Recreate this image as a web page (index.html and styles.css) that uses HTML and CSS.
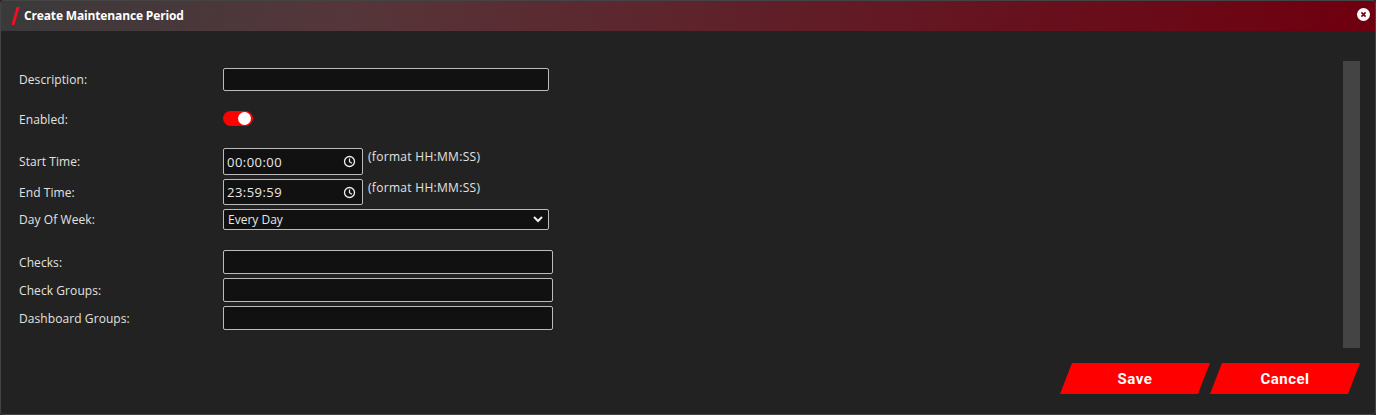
FILE: index.html
```html
<!DOCTYPE html>
<html lang="en">
<head>
    <meta charset="UTF-8">
    <title>Create Maintenance Period</title>
    <link rel="stylesheet" href="styles.css">
</head>
<body>
    <div class="dialog">
        <div class="titlebar">
            <span class="slash"></span>
            <span class="title">Create Maintenance Period</span>
            <span class="close">
                <svg width="11" height="11" viewBox="0 0 11 11"><path d="M3.4 3.4l4.2 4.2M7.6 3.4l-4.2 4.2" stroke="#7a0010" stroke-width="1.6" fill="none"/></svg>
            </span>
        </div>

        <div class="content">
            <div class="form">
                <div class="row row-description">
                    <label>Description:</label>
                    <div class="field input input-wide"></div>
                </div>
                <div class="row row-enabled">
                    <label>Enabled:</label>
                    <div class="toggle"><span class="knob"></span></div>
                </div>
                <div class="row row-start">
                    <label>Start Time:</label>
                    <div class="field input input-time">
                        <span class="time">00:00:00</span>
                        <svg class="clock" width="13" height="13" viewBox="0 0 13 13"><circle cx="6.5" cy="6.5" r="5" stroke="#eee" stroke-width="1.3" fill="none"/><path d="M6.5 3.4v3.3l2.4 1.5" stroke="#eee" stroke-width="1.2" fill="none"/></svg>
                    </div>
                    <span class="hint">(format HH:MM:SS)</span>
                </div>
                <div class="row row-end">
                    <label>End Time:</label>
                    <div class="field input input-time input-time-end">
                        <span class="time">23:59:59</span>
                        <svg class="clock" width="13" height="13" viewBox="0 0 13 13"><circle cx="6.5" cy="6.5" r="5" stroke="#eee" stroke-width="1.3" fill="none"/><path d="M6.5 3.4v3.3l2.4 1.5" stroke="#eee" stroke-width="1.2" fill="none"/></svg>
                    </div>
                    <span class="hint">(format HH:MM:SS)</span>
                </div>
                <div class="row row-day">
                    <label>Day Of Week:</label>
                    <div class="field input input-wide select">
                        <span>Every Day</span>
                        <svg width="10" height="7" viewBox="0 0 10 7"><path d="M1 1l4 4 4-4" stroke="#eee" stroke-width="2" fill="none"/></svg>
                    </div>
                </div>
                <div class="row row-checks">
                    <label>Checks:</label>
                    <div class="field input input-multi"></div>
                </div>
                <div class="row row-multi">
                    <label>Check Groups:</label>
                    <div class="field input input-multi"></div>
                </div>
                <div class="row row-multi">
                    <label>Dashboard Groups:</label>
                    <div class="field input input-multi"></div>
                </div>
            </div>
            <div class="scrollbar"></div>
        </div>

        <div class="footer">
            <button class="btn">Save</button>
            <button class="btn">Cancel</button>
        </div>
    </div>
</body>
</html>
```

FILE: styles.css
```css
html, body {
    margin: 0;
    height: 100%;
    background: #222;
}
body {
    font-family: "Open Sans", "Noto Sans", sans-serif;
    font-size: 12px;
    color: #e2e2e2;
}
.dialog {
    box-sizing: border-box;
    width: 1376px;
    height: 415px;
    background: #222;
    border: 1px solid #444;
    border-radius: 3px;
    display: flex;
    flex-direction: column;
    overflow: hidden;
}
.titlebar {
    height: 30px;
    flex: none;
    display: flex;
    align-items: center;
    background: linear-gradient(100deg, #3a3a3a 0%, #55363a 25%, #6f0010 98%);
}
.slash {
    width: 3px;
    height: 18px;
    margin-left: 13px;
    background: #f01020;
    transform: skewX(-16deg);
}
.title {
    margin-left: 7px;
    margin-bottom: 2px;
    font-size: 12px;
    font-weight: 700;
    letter-spacing: -0.15px;
    color: #fff;
}
.close {
    width: 13px;
    height: 13px;
    margin-left: auto;
    margin-right: 5px;
    margin-bottom: 3px;
    border-radius: 50%;
    background: #fff;
    display: flex;
    align-items: center;
    justify-content: center;
}
.content {
    display: flex;
    justify-content: space-between;
    height: 317px;
    flex: none;
}
.form {
    padding-top: 37px;
    padding-left: 18px;
}
.row {
    display: flex;
    align-items: center;
}
.row label {
    width: 204px;
    flex: none;
    line-height: 15px;
    letter-spacing: 0.08px;
}
.field {
    box-sizing: border-box;
    background: #111;
    border: 1px solid #bbb;
    border-radius: 2px;
}
.input-wide {
    width: 326px;
    height: 23px;
}
.input-time {
    width: 140px;
    height: 27px;
    display: flex;
    align-items: center;
    justify-content: space-between;
    padding: 0 6px 0 3px;
}
.input-time-end {
    height: 26px;
}
.time {
    font-size: 13px;
    letter-spacing: 0.45px;
    color: #e8e8e8;
}
.hint {
    align-self: flex-start;
    margin-left: 5px;
    line-height: 17px;
    letter-spacing: 0.3px;
}
.select {
    height: 21px;
    display: flex;
    align-items: center;
    justify-content: space-between;
    padding: 0 5px 0 4px;
    color: #e8e8e8;
}
.input-multi {
    width: 330px;
    height: 24px;
}
.row-enabled {
    margin-top: 20px;
}
.row-enabled label {
    line-height: 17px;
}
.toggle {
    align-self: flex-start;
    width: 30px;
    height: 15px;
    border-radius: 8px;
    background: #f00;
    position: relative;
}
.knob {
    position: absolute;
    right: 2px;
    top: 1px;
    width: 13px;
    height: 13px;
    border-radius: 50%;
    background: #fff;
}
.row-start {
    margin-top: 20px;
}
.row-end {
    margin-top: 4px;
}
.row-day {
    margin-top: 4px;
}
.row-checks {
    margin-top: 20px;
}
.row-multi {
    margin-top: 4px;
}
.scrollbar {
    width: 17px;
    height: 287px;
    margin-top: 30px;
    margin-right: 15px;
    background: #444;
}
.footer {
    display: flex;
    justify-content: flex-end;
    padding-top: 15px;
    padding-right: 15px;
}
.btn {
    width: 150px;
    height: 31px;
    border: none;
    padding: 0;
    background: #f00;
    color: #fff;
    font-family: "Roboto", "Liberation Sans", sans-serif;
    font-size: 15px;
    font-weight: 700;
    letter-spacing: 0.5px;
    clip-path: polygon(12px 0, 100% 0, calc(100% - 12px) 100%, 0 100%);
}
```
